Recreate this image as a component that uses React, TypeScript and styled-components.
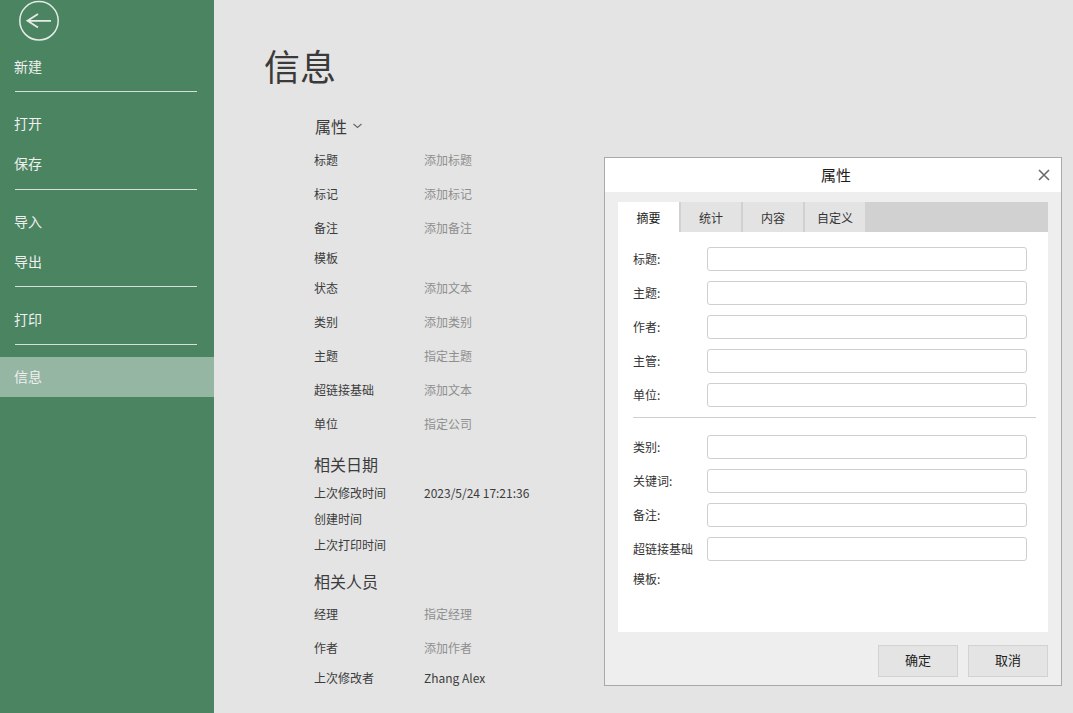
import React from "react";
import styled, { createGlobalStyle } from "styled-components";

const Global = createGlobalStyle`
  html, body { margin: 0; padding: 0; height: 100%; overflow: hidden; }
  body { font-family: "Noto Sans CJK SC", "Noto Sans", sans-serif; background: #e4e4e4; }
  #root { height: 100%; }
`;

const Page = styled.div`
  position: relative;
  display: flex;
  width: 1073px;
  height: 713px;
  overflow: hidden;
  background: #e4e4e4;
`;

const Sidebar = styled.nav`
  flex: 0 0 214px;
  display: flex;
  flex-direction: column;
  background: #4a8461;
`;

const BackButton = styled.button`
  display: block;
  width: 42px;
  height: 42px;
  margin: 0 0 5px 18px;
  padding: 0;
  border: 0;
  background: none;
  svg { display: block; }
`;

const NavItem = styled.div<{ $active?: boolean }>`
  height: 40px;
  flex: 0 0 40px;
  box-sizing: border-box;
  display: flex;
  align-items: center;
  padding: 0 0 2px 14px;
  font-size: 14px;
  color: #f0f0f0;
  background: ${(p) => (p.$active ? "#94b6a2" : "transparent")};
`;

const NavRule = styled.div<{ $before: number; $after: number }>`
  height: 1px;
  margin: ${(p) => p.$before}px 17px ${(p) => p.$after}px 15px;
  background: #d6dfd9;
`;

const Main = styled.main`
  flex: 1;
  padding: 0 0 0 50px;
`;

const PageTitle = styled.h1`
  margin: 0 0 19px;
  padding-top: 40px;
  height: 50px;
  line-height: 50px;
  font-size: 36px;
  font-weight: 400;
  color: #3a3a3a;
`;

const Details = styled.div`
  padding-left: 50px;
  display: flex;
  flex-direction: column;
`;

const SectionTitle = styled.h2<{ $height: number; $top?: number; $indent?: number }>`
  display: flex;
  align-items: center;
  gap: 6px;
  height: ${(p) => p.$height}px;
  margin: ${(p) => p.$top ?? 0}px 0 0 ${(p) => p.$indent ?? 0}px;
  font-size: 16px;
  font-weight: 400;
  color: #3c3c3c;
`;

const InfoRow = styled.div<{ $height: number }>`
  display: flex;
  align-items: center;
  height: ${(p) => p.$height}px;
  font-size: 12px;
  color: #3c3c3c;
`;

const InfoLabel = styled.span`
  flex: 0 0 110px;
`;

const InfoValue = styled.span<{ $muted?: boolean }>`
  color: ${(p) => (p.$muted ? "#8f8f8f" : "#3c3c3c")};
`;

const Dialog = styled.section`
  position: absolute;
  left: 604px;
  top: 157px;
  width: 458px;
  height: 529px;
  box-sizing: border-box;
  display: flex;
  flex-direction: column;
  border: 1px solid #a9a9a9;
  background: #eeeeee;
`;

const DialogHeader = styled.header`
  position: relative;
  flex: 0 0 34px;
  box-sizing: border-box;
  display: flex;
  align-items: center;
  justify-content: center;
  padding: 0 0 2px 6px;
  background: #ffffff;
  font-size: 15px;
  color: #1c1c1c;
`;

const CloseButton = styled.button`
  position: absolute;
  right: 10px;
  top: 11px;
  width: 13px;
  height: 13px;
  padding: 0;
  border: 0;
  background: none;
  svg { display: block; }
`;

const DialogBody = styled.div`
  flex: 0 0 430px;
  display: flex;
  flex-direction: column;
  margin: 10px 13px 0;
  background: #ffffff;
`;

const TabBar = styled.div`
  flex: 0 0 30px;
  display: flex;
  background: #d1d1d1;
`;

const Tab = styled.div<{ $active?: boolean }>`
  flex: 0 0 ${(p) => (p.$active ? 61 : 60)}px;
  margin-right: 2px;
  display: flex;
  align-items: center;
  justify-content: center;
  font-size: 12px;
  color: ${(p) => (p.$active ? "#222222" : "#333333")};
  background: ${(p) => (p.$active ? "#ffffff" : "#e3e3e3")};
`;

const Form = styled.div`
  padding: 10px 0 0 15px;
  display: flex;
  flex-direction: column;
`;

const FieldRow = styled.div<{ $height?: number }>`
  height: ${(p) => p.$height ?? 34}px;
  display: flex;
  align-items: center;
  font-size: 12px;
  color: #333333;
`;

const FieldLabel = styled.label`
  flex: 0 0 74px;
  margin-bottom: 2px;
`;

const FieldInput = styled.div`
  width: 320px;
  height: 24px;
  box-sizing: border-box;
  border: 1px solid #cfcfcf;
  border-radius: 3px;
  background: #ffffff;
`;

const FormRule = styled.div`
  height: 1px;
  margin: 5px 12px 12px 0;
  background: #cfcfcf;
`;

const DialogFooter = styled.footer`
  display: flex;
  justify-content: flex-end;
  gap: 10px;
  padding: 13px 13px 0 0;
`;

const FooterButton = styled.button`
  width: 80px;
  height: 32px;
  padding: 0 0 3px;
  border: 1px solid #d2d2d2;
  background: #e4e4e4;
  font-family: inherit;
  font-size: 13px;
  color: #222222;
`;

const Chevron = () => (
  <svg width="9" height="6" viewBox="0 0 9 6" fill="none" stroke="#666666" strokeWidth="1.1">
    <path d="M0.5 1 L4.5 4.5 L8.5 1" />
  </svg>
);

const BackIcon = () => (
  <svg width="42" height="42" viewBox="0 0 42 42" fill="none" stroke="#e6ebe8" strokeWidth="1.5">
    <circle cx="21" cy="20.8" r="19.2" />
    <path d="M9.5 20.8 H33 M20 14 L9.5 20.8 L20 27.6" strokeWidth="1.8" />
  </svg>
);

const CloseIcon = () => (
  <svg width="13" height="13" viewBox="0 0 13 13" fill="none" stroke="#6b6b6b" strokeWidth="1.6">
    <path d="M1 1 L11 11 M11 1 L1 11" />
  </svg>
);

type Info = [string, string, boolean, number];

const propertyRows: Info[] = [
  ["标题", "添加标题", true, 34],
  ["标记", "添加标记", true, 34],
  ["备注", "添加备注", true, 34],
  ["模板", "", true, 26],
  ["状态", "添加文本", true, 34],
  ["类别", "添加类别", true, 34],
  ["主题", "指定主题", true, 34],
  ["超链接基础", "添加文本", true, 34],
  ["单位", "指定公司", true, 34],
];

const dateRows: Info[] = [
  ["上次修改时间", "2023/5/24 17:21:36", false, 26],
  ["创建时间", "", false, 26],
  ["上次打印时间", "", false, 26],
];

const peopleRows: Info[] = [
  ["经理", "指定经理", true, 34],
  ["作者", "添加作者", true, 34],
  ["上次修改者", "Zhang Alex", false, 26],
];

const renderRows = (rows: Info[]) =>
  rows.map(([label, value, muted, height]) => (
    <InfoRow key={label} $height={height}>
      <InfoLabel>{label}</InfoLabel>
      <InfoValue $muted={muted}>{value}</InfoValue>
    </InfoRow>
  ));

const topFields = ["标题:", "主题:", "作者:", "主管:", "单位:"];
const bottomFields = ["类别:", "关键词:", "备注:", "超链接基础"];

export default function App() {
  return (
    <Page>
      <Global />
      <Sidebar>
        <BackButton aria-label="返回">
          <BackIcon />
        </BackButton>
        <NavItem>新建</NavItem>
        <NavRule $before={4} $after={12} />
        <NavItem>打开</NavItem>
        <NavItem>保存</NavItem>
        <NavRule $before={5} $after={12} />
        <NavItem>导入</NavItem>
        <NavItem>导出</NavItem>
        <NavRule $before={4} $after={13} />
        <NavItem>打印</NavItem>
        <NavRule $before={4} $after={12} />
        <NavItem $active>信息</NavItem>
      </Sidebar>
      <Main>
        <PageTitle>信息</PageTitle>
        <Details>
          <SectionTitle $height={33} $indent={1}>
            属性 <Chevron />
          </SectionTitle>
          {renderRows(propertyRows)}
          <SectionTitle $height={30} $top={9}>相关日期</SectionTitle>
          {renderRows(dateRows)}
          <SectionTitle $height={30} $top={9}>相关人员</SectionTitle>
          {renderRows(peopleRows)}
        </Details>
      </Main>
      <Dialog>
        <DialogHeader>
          属性
          <CloseButton aria-label="关闭">
            <CloseIcon />
          </CloseButton>
        </DialogHeader>
        <DialogBody>
          <TabBar>
            <Tab $active>摘要</Tab>
            <Tab>统计</Tab>
            <Tab>内容</Tab>
            <Tab>自定义</Tab>
          </TabBar>
          <Form>
            {topFields.map((f) => (
              <FieldRow key={f}>
                <FieldLabel>{f}</FieldLabel>
                <FieldInput />
              </FieldRow>
            ))}
            <FormRule />
            {bottomFields.map((f) => (
              <FieldRow key={f}>
                <FieldLabel>{f}</FieldLabel>
                <FieldInput />
              </FieldRow>
            ))}
            <FieldRow $height={26}>
              <FieldLabel>模板:</FieldLabel>
            </FieldRow>
          </Form>
        </DialogBody>
        <DialogFooter>
          <FooterButton>确定</FooterButton>
          <FooterButton>取消</FooterButton>
        </DialogFooter>
      </Dialog>
    </Page>
  );
}
